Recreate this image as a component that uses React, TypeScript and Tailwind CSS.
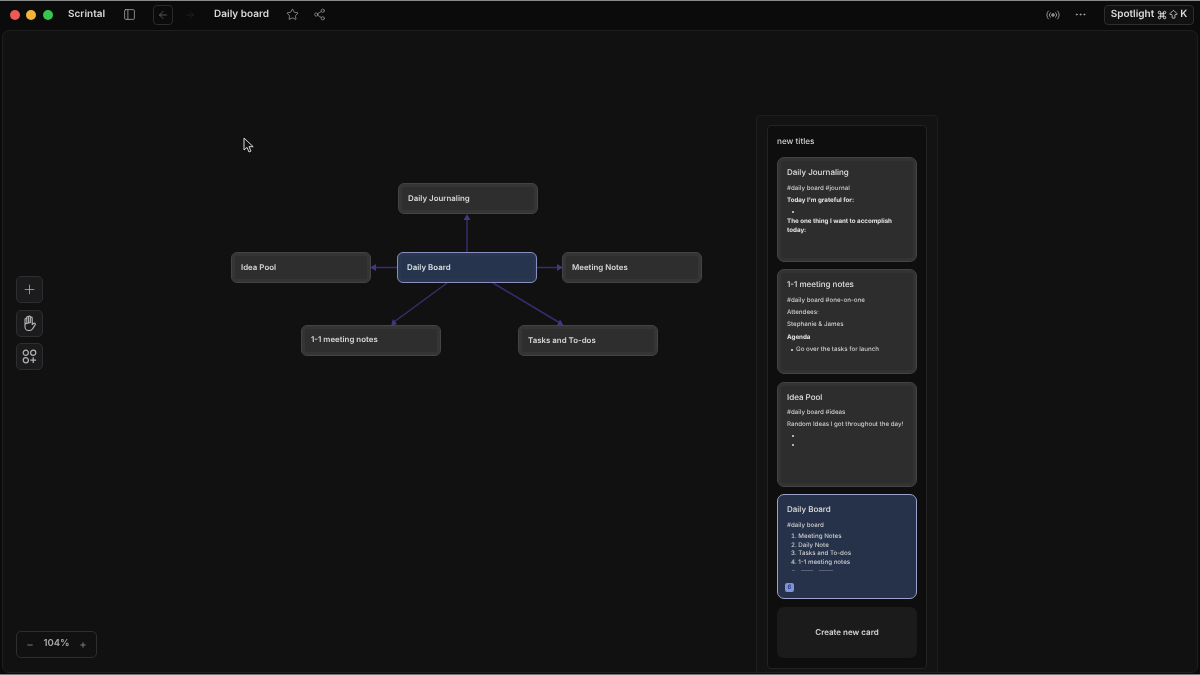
import React from "react";
import { ArrowLeft, ArrowRight, Star, Share2, PanelLeft, MoreHorizontal, Plus, Minus, ArrowBigUp, Command } from "lucide-react";

const nodeBase =
  "absolute flex h-[31px] w-[140px] items-center rounded-[6px] border px-[9px] text-[7.9px] font-semibold";

function GraphNode({ x, y, label, active }: { x: number; y: number; label: string; active?: boolean }) {
  return (
    <div
      className={
        active
          ? nodeBase + " border-[#8a8fc0] bg-[#27344d] shadow-[inset_0_0_0_3px_#2a3751] text-[#dcdee3]"
          : nodeBase + " border-[#444444] bg-[#2e2e2e] shadow-[inset_0_0_0_3px_#353535] text-[#d6d6d6]"
      }
      style={{ left: x, top: y }}
    >
      {label}
    </div>
  );
}

function Card({ title, active, h, children }: { title: string; active?: boolean; h: string; children: React.ReactNode }) {
  return (
    <div
      className={
        "relative shrink-0 overflow-hidden rounded-[7px] border px-[9px] pt-[8px] " +
        h +
        (active
          ? " border-[#9ba3cc] bg-[#25324a]"
          : " border-[#444444] bg-[#2d2d2d] shadow-[inset_0_0_0_3px_#333333]")
      }
    >
      <div className="text-[8px] font-medium leading-[12px] text-[#e0e0e0]">{title}</div>
      <div className="mt-[4.500px] text-[6.2px] font-medium leading-[12.2px] text-[#cacaca]">{children}</div>
    </div>
  );
}

function Bullet() {
  return <div className="ml-[4px] flex h-[9px] items-center pl-[1px]"><span className="h-[2px] w-[2px] rounded-full bg-[#e0e0e0]" /></div>;
}

function ToolButton({ children }: { children: React.ReactNode }) {
  return (
    <div className="flex h-[27px] w-[27px] items-center justify-center rounded-[5px] border border-[#2e2e2e] bg-[#1b1b1d] text-[#b5b5b5]">
      {children}
    </div>
  );
}

export default function App() {
  return (
    <div
      className="flex h-[675px] w-[1200px] flex-col overflow-hidden border-y border-t-[#8a8a8a] border-b-[#777777] bg-[#0b0b0c] text-[#e0e0e0] antialiased will-change-transform [text-rendering:geometricPrecision]"
      style={{ fontFamily: "Inter, 'Liberation Sans', sans-serif" }}
    >
      {/* Title bar */}
      <header className="flex h-[29px] shrink-0 items-center pb-[2px] pl-[9.500px] pr-[6px]">
        <div className="flex items-center gap-[6.750px]">
          <span className="h-[10px] w-[10px] rounded-full bg-[#ee5a54]" />
          <span className="h-[10px] w-[10px] rounded-full bg-[#f4b43a]" />
          <span className="h-[10px] w-[10px] rounded-full bg-[#37c552]" />
        </div>
        <span className="ml-[15px] text-[10px] font-semibold text-[#d8d8d8]">Scrintal</span>
        <PanelLeft className="ml-[18px] h-[13px] w-[13px] text-[#b0b0b0]" strokeWidth={1.4} />
        <div className="ml-[17px] flex h-[20px] w-[20px] items-center justify-center rounded-[4px] border border-[#2b2b2b] text-[#7d7d7d]">
          <ArrowLeft className="h-[12px] w-[12px]" strokeWidth={1.3} />
        </div>
        <ArrowRight className="ml-[11px] h-[12px] w-[12px] text-[#2a2a2a]" strokeWidth={1.3} />
        <span className="ml-[18px] text-[10px] font-semibold text-[#d8d8d8]">Daily board</span>
        <Star className="ml-[17px] h-[13px] w-[13px] text-[#b0b0b0]" strokeWidth={1.3} />
        <Share2 className="ml-[14px] h-[13px] w-[13px] text-[#a0a0a0]" strokeWidth={1.3} />
        <div className="ml-auto flex items-center">
          <svg width="14" height="10" viewBox="0 0 14 10" fill="none" stroke="#8f8f8f" strokeWidth="1">
            <circle cx="7" cy="5" r="1.3" fill="#8f8f8f" />
            <path d="M4.6 2.4a3.6 3.6 0 0 0 0 5.2M9.4 2.4a3.6 3.6 0 0 1 0 5.2M2.6 .8a6 6 0 0 0 0 8.4M11.4 .8a6 6 0 0 1 0 8.4" />
          </svg>
          <MoreHorizontal className="ml-[14px] h-[13px] w-[13px] text-[#b0b0b0]" strokeWidth={1.5} />
          <div className="ml-[17px] flex h-[20px] w-[90px] items-center justify-center gap-[1px] rounded-[4px] border border-[#2e2e2e] bg-[#111112] text-[10px] font-semibold text-[#dcdcdc]">
            <span>Spotlight</span>
            <Command className="ml-[2px] h-[10px] w-[10px]" strokeWidth={2.4} />
            <ArrowBigUp className="h-[11px] w-[11px]" strokeWidth={1.8} />
            <span>K</span>
          </div>
        </div>
      </header>

      {/* Canvas */}
      <main className="relative mx-[2px] mb-[1px] flex-1 overflow-hidden rounded-[7px] border border-[#1f1f20] bg-[#111112]">
        {/* Edges (canvas origin is 3,31) */}
        <svg className="absolute left-0 top-0" width="1194" height="640" viewBox="3 31 1194 640" fill="none">
          <g stroke="#352f6b" strokeWidth="1.5">
            <path d="M467 252V218" />
            <path d="M397 267.500H375" />
            <path d="M537 267.500H558" />
            <path d="M447 283L394 322" />
            <path d="M493 283L560 323" />
          </g>
          <g fill="#3f3980">
            <path d="M467 214l3.500 6h-7z" />
            <path d="M370 267.500l6-3.500v7z" />
            <path d="M563 267.500l-6-3.500v7z" />
            <path d="M391 326l2-7 4 5z" />
            <path d="M564 326l-7-.5 3-6z" />
          </g>
        </svg>

        <GraphNode x={395} y={152} label="Daily Journaling" />
        <GraphNode x={228} y={221} label="Idea Pool" />
        <GraphNode x={394} y={221} label="Daily Board" active />
        <GraphNode x={559} y={221} label="Meeting Notes" />
        <GraphNode x={298} y={293.5} label="1-1 meeting notes" />
        <GraphNode x={515} y={294} label="Tasks and To-dos" />

        {/* Cursor */}
        <svg className="absolute left-[240px] top-[106px]" width="12" height="17" viewBox="0 0 12 17">
          <path d="M1 1v12l3-2.600 2 4.600 2-.9-2-4.400h4.200z" fill="#111" stroke="#d8d8d8" strokeWidth="1" />
        </svg>

        {/* Left tools */}
        <div className="absolute left-[13px] top-[245px] flex flex-col gap-[6.500px]">
          <ToolButton><Plus className="h-[15px] w-[15px]" strokeWidth={1.2} /></ToolButton>
          <ToolButton>
            <svg width="15" height="17" viewBox="0 0 15 17" fill="none" stroke="currentColor" strokeWidth="1.1" strokeLinecap="round" strokeLinejoin="round">
              <path d="M3 9V4.200a.9.9 0 0 1 1.800 0V7.500M4.800 7.500V2.400a.9.9 0 0 1 1.800 0V7.500M6.600 7.500V1.900a.9.9 0 0 1 1.800 0V7.500M8.400 7.500V3a.9.9 0 0 1 1.800 0V9.500l1.600-1.300a1 1 0 0 1 1.400 1.400l-2.300 3.800c-.8 1.400-2 2.100-3.500 2.100H6.500c-2 0-3.500-1.600-3.500-3.600V9z" />
            </svg>
          </ToolButton>
          <ToolButton>
            <svg width="15" height="15" viewBox="0 0 15 15" fill="none" stroke="currentColor" strokeWidth="1.2">
              <circle cx="3.800" cy="3.800" r="2.600" />
              <circle cx="11.200" cy="3.800" r="2.600" />
              <circle cx="3.800" cy="11.200" r="2.600" />
              <path d="M11.200 8.300v5.800M8.300 11.200h5.800" />
            </svg>
          </ToolButton>
        </div>

        {/* Zoom control */}
        <div className="absolute left-[13px] top-[600px] flex h-[27px] w-[81px] items-center justify-between rounded-[5px] border border-[#2e2e2e] px-[9px] text-[#aaaaaa]">
          <Minus className="h-[8px] w-[8px]" strokeWidth={2} />
          <span className="text-[9.500px] font-semibold">104%</span>
          <Plus className="h-[8px] w-[8px]" strokeWidth={2} />
        </div>

        {/* Side panel */}
        <aside className="absolute left-[753px] top-[84px] h-[570px] w-[182px] rounded-[4px] border border-[#1e1e1f] bg-[#131314] px-[10px] pt-[9px]">
          <div className="flex h-[544px] flex-col rounded-[4px] border border-[#232324] bg-[#0e0e0f] px-[9px]">
            <div className="flex h-[31px] shrink-0 items-center text-[8.200px] font-medium text-[#d4d4d4]">new titles</div>
            <div className="flex flex-col gap-[7.400px]">
              <Card title="Daily Journaling" h="h-[105px]">
                <div>#daily board #journal</div>
                <div className="font-bold text-[#e2e2e2]">Today I'm grateful for:</div>
                <div className="pt-[1px]"><Bullet /></div>
                <div className="font-bold leading-[9.500px] text-[#e2e2e2]">The one thing I want to accomplish today:</div>
              </Card>
              <Card title="1-1 meeting notes" h="h-[105px]">
                <div>#daily board #one-on-one</div>
                <div>Attendees:</div>
                <div>Stephanie &amp; James</div>
                <div className="font-bold text-[#e2e2e2]">Agenda</div>
                <div className="flex items-center gap-[3px] pl-[4px]"><span className="h-[2px] w-[2px] rounded-full bg-[#e0e0e0]" />Go over the tasks for launch</div>
              </Card>
              <Card title="Idea Pool" h="h-[105px]">
                <div>#daily board #ideas</div>
                <div>Random Ideas I got throughout the day!</div>
                <Bullet />
                <Bullet />
              </Card>
              <Card title="Daily Board" h="h-[105px]" active>
                <div>#daily board</div>
                <ol className="ml-[4px] mt-[1px] list-inside list-decimal leading-[8.700px]">
                  <li>Meeting Notes</li>
                  <li>Daily Note</li>
                  <li>Tasks and To-dos</li>
                  <li>1-1 meeting notes</li>
                </ol>
                <div className="ml-[5px] mt-[2px] flex gap-[6px] opacity-30">
                  <span className="h-px w-[3px] bg-[#cfcfcf]" />
                  <span className="h-px w-[12px] bg-[#cfcfcf]" />
                  <span className="h-px w-[14px] bg-[#cfcfcf]" />
                </div>
                <span className="absolute bottom-[6px] left-[7px] flex h-[9px] w-[9px] items-center justify-center rounded-[2px] bg-[#7f93dc] text-[6px] leading-none text-[#1f2a55]">6</span>
              </Card>
              <div className="flex h-[51px] shrink-0 items-center justify-center rounded-[7px] bg-[#1b1b1c] text-[8px] font-semibold text-[#d4d4d4]">
                Create new card
              </div>
            </div>
          </div>
        </aside>
      </main>
    </div>
  );
}
